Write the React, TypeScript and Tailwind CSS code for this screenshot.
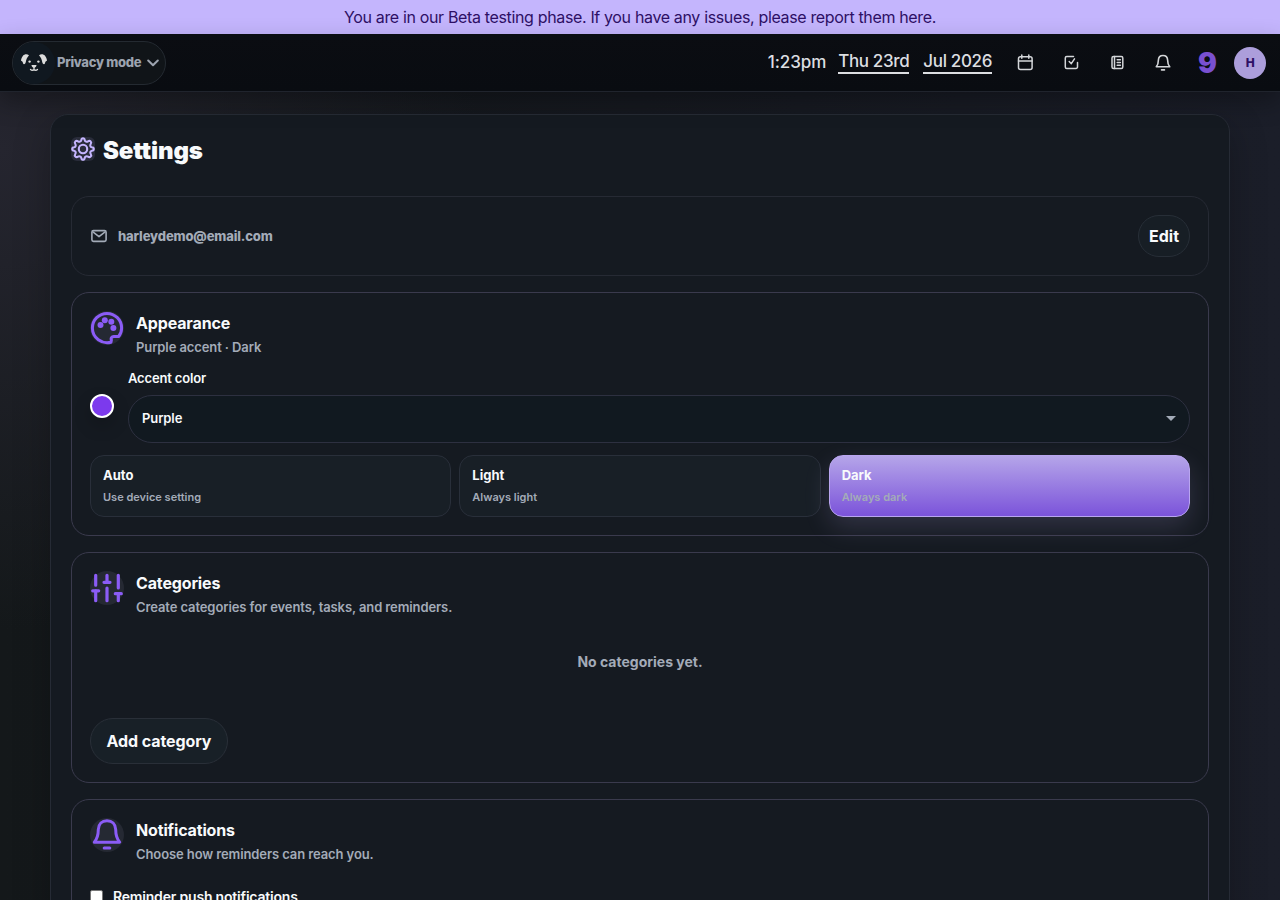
import React from 'react'

const modes = [
  { name: 'Auto', hint: 'Use device setting' },
  { name: 'Light', hint: 'Always light' },
  { name: 'Dark', hint: 'Always dark', active: true },
]

function PuppyIcon() {
  return (
    <svg width="28" height="22" viewBox="0 0 28 22" fill="#dcdcdc">
      <path d="M9 3.200 C7 1.800 4.500 2 3 3.800 C1.500 5.800 .8 7.800 1.200 9 C2.300 8.800 2.700 9.800 3 11.200 C3.600 13 5.200 12.300 5.800 10 C6.200 7.500 7 5.500 9 3.200Z" />
      <path d="M19 3.200 C21 1.800 23.500 2 25 3.800 C26.500 5.800 27.200 7.800 26.800 9 C25.700 8.800 25.300 9.800 25 11.200 C24.400 13 22.800 12.300 22.200 10 C21.800 7.500 21 5.500 19 3.200Z" />
      <circle cx="9.600" cy="9.600" r="1.200" />
      <circle cx="18.400" cy="9.600" r="1.200" />
      <path d="M11.500 13h5c0 1.500-1.200 2.500-2.500 3-1.300-.5-2.500-1.500-2.500-3Z" />
      <path d="M14 15.500v1.500M10.500 17.500c1.200 1 2.600.8 3.500 0 .9.800 2.300 1 3.500 0" fill="none" stroke="#dcdcdc" strokeWidth="1.300" strokeLinecap="round" />
    </svg>
  )
}

function GearIcon() {
  return (
    <svg width="24" height="24" viewBox="0 0 24 24" fill="none" stroke="#c4b5fd" strokeWidth="2.100" strokeLinejoin="round">
      <path d="M10.300 3.100C10.600.6 13.400.6 13.700 3.100C14 4.600 15.700 5.200 17 4.300C19 2.900 21.100 5 19.700 7C18.800 8.300 19.400 10 20.900 10.300C23.400 10.600 23.400 13.400 20.900 13.700C19.400 14 18.800 15.700 19.700 17C21.100 19 19 21.100 17 19.700C15.700 18.800 14 19.400 13.700 20.900C13.400 23.400 10.600 23.400 10.300 20.900C10 19.400 8.300 18.800 7 19.700C5 21.100 2.900 19 4.300 17C5.200 15.700 4.600 14 3.100 13.700C.6 13.400.6 10.600 3.100 10.300C4.600 10 5.200 8.300 4.300 7C2.900 5 5 2.900 7 4.300C8.300 5.200 10 4.600 10.300 3.100Z" />
      <circle cx="12" cy="12" r="4.200" />
    </svg>
  )
}

function MailIcon() {
  return (
    <svg width="18" height="18" viewBox="0 0 18 18" fill="none" stroke="currentColor" strokeWidth="1.600" strokeLinecap="round" strokeLinejoin="round">
      <rect x="1.900" y="3.600" width="14.200" height="10.800" rx="1.600" />
      <path d="M3.200 5.200L9 9.600l5.800-4.400" />
    </svg>
  )
}

function CalendarIcon() {
  return (
    <svg width="18" height="18" viewBox="0 0 18 18" fill="none" stroke="#d4d6d9" strokeWidth="1.500" strokeLinecap="round">
      <rect x="2.500" y="2.700" width="13.600" height="12.700" rx="2" />
      <path d="M2.500 7h13.600M5.800 1v3.200M12.800 1v3.200" />
    </svg>
  )
}

function TaskIcon() {
  return (
    <svg width="18" height="18" viewBox="0 0 18 18" fill="none" stroke="#d4d6d9" strokeWidth="1.500" strokeLinecap="round" strokeLinejoin="round">
      <path d="M11.500 2.500H4.800A1.500 1.500 0 0 0 3.300 4v9A1.500 1.500 0 0 0 4.800 14.500h9.200a1.500 1.500 0 0 0 1.500-1.500V8.500" />
      <path d="M7.200 7.500l2.100 2.200L12.500 4.800" />
    </svg>
  )
}

function NotebookIcon() {
  return (
    <svg width="18" height="18" viewBox="0 0 18 18" fill="none" stroke="#d4d6d9" strokeWidth="1.500" strokeLinecap="round">
      <rect x="4" y="2.500" width="10.800" height="12" rx="1.500" />
      <path d="M6.500 2.500v12M9.200 5.700h3.200M9.200 8.500h3.200M9.200 11.300h3.200" />
    </svg>
  )
}

function BellIcon({ size, weight }: { size: number; weight: number }) {
  return (
    <svg width={size} height={size} viewBox="0 0 34 34" fill="none" stroke="currentColor" strokeWidth={weight} strokeLinecap="round" strokeLinejoin="round">
      <path d="M4.300 24.200C7.500 20.500 8.300 17 8.300 11.500C8.500 6 12 2.700 17 2.700S25.500 6 25.700 11.500C25.700 17 26.500 20.500 29.700 24.200Z" />
      <path d="M14.200 30h5.600" />
    </svg>
  )
}

function SlidersIcon() {
  return (
    <svg width="34" height="34" viewBox="0 0 34 34" fill="none" stroke="currentColor" strokeWidth="3.200" strokeLinecap="round">
      <path d="M5.700 4.300v9.900M5.700 19.800v9.900M17 4.300v7M17 17v12.700M28.300 4.300v12.700M28.300 22.700v7" />
      <path d="M2.700 19.800h6M14 11.300h6M25.300 22.700h6" />
    </svg>
  )
}

function PaletteIcon() {
  return (
    <svg width="34" height="34" viewBox="0 0 34 34" fill="none">
      <path d="M21 31.200C12 33.500 2.400 27 2.400 17A14.600 14.600 0 0 1 31.600 17C31.600 20.500 30.500 23.500 28.500 25.600L23.800 25.600C21.700 25.800 20.600 27.300 21.400 29Z" stroke="#8b5cf6" strokeWidth="3" strokeLinejoin="round" />
      <g fill="#8b5cf6">
        <circle cx="10.500" cy="14" r="3" />
        <circle cx="14.800" cy="9.200" r="3" />
        <circle cx="21.300" cy="10.700" r="3" />
        <circle cx="23.400" cy="17" r="3" />
      </g>
    </svg>
  )
}

function SectionHeader({ icon, title, text }: { icon: React.ReactNode; title: string; text: string }) {
  return (
    <div className="flex gap-3">
      <span className="flex size-[34px] items-center justify-center rounded-full bg-[#252933] text-[#8b5cf6]">{icon}</span>
      <div className="pt-0.5">
        <h2 className="text-[16px] leading-5 font-bold tracking-[-0.15px] text-[#f8fafc]">{title}</h2>
        <p className="mt-1 text-[13px] leading-5 font-semibold tracking-[-0.1px] text-[#a3abb8]">{text}</p>
      </div>
    </div>
  )
}

export default function App() {
  return (
    <div className="h-[900px] overflow-hidden bg-[radial-gradient(circle_at_0_150px,#25252f,transparent_480px),linear-gradient(90deg,#14181a,#171a21_50%,#1b1e29)] font-['Inter',sans-serif] text-[#f8fafc]">
      <div className="flex h-[34px] items-center justify-center bg-[#c4b5fd] text-[16px] tracking-[-0.35px] text-[#2e1065]">
        You are in our Beta testing phase. If you have any issues, please report them here.
      </div>

      <header className="relative flex h-[58px] items-center justify-between border-b border-[#20242d] bg-[linear-gradient(180deg,#0b0d12,#090c11)] pr-3.5 pl-3 shadow-[0_10px_24px_rgba(0,0,0,0.3)]">
        <button className="flex h-11 w-[154px] items-center rounded-full border border-[#242a31] bg-[#101418] text-[#9ca3af]">
          <span className="flex size-[42px] items-center justify-center rounded-full bg-[#101820]">
            <PuppyIcon />
          </span>
          <span className="ml-0.5 pt-px text-[13px] font-extrabold tracking-[-0.3px]">Privacy mode</span>
          <svg width="12" height="12" viewBox="0 0 12 12" fill="none" stroke="currentColor" strokeWidth="2" strokeLinecap="round" strokeLinejoin="round" className="ml-1.5">
            <path d="M1.200 3.500L6 8.300l4.800-4.800" />
          </svg>
        </button>

        <div className="flex items-center text-[17px] font-medium tracking-[-0.35px] text-[#dcdee1]">
          <span className="pt-px tracking-[-0.1px]">1:23pm</span>
          <span className="ml-3 border-b-2 border-[#dcdee1] leading-[21px]">Thu 23rd</span>
          <span className="ml-3.5 border-b-2 border-[#dcdee1] leading-[21px]">Jul 2026</span>
          <nav className="ml-6 flex items-center gap-7 text-[#d4d6d9]">
            <CalendarIcon />
            <TaskIcon />
            <NotebookIcon />
            <BellIcon size={18} weight={3} />
          </nav>
          <span className="ml-[26px] w-[18px] pt-px text-center text-[28px] leading-8 font-black text-[#7950d1]">9</span>
          <span className="ml-[18px] flex size-8 items-center justify-center rounded-full bg-[#ac9edb] text-[12px] font-extrabold text-[#2e1065]">H</span>
        </div>
      </header>

      <main className="mx-[50px] mt-[22px] h-[1100px] rounded-[18px] border border-[#262b35] bg-[#151a21] px-5 pt-5 shadow-[0_12px_36px_rgba(0,0,0,0.25)]">
        <div className="flex h-8 items-center gap-2">
          <span className="mb-1 rounded-md bg-[#292c3a]">
            <GearIcon />
          </span>
          <h1 className="text-[24px] font-black tracking-[-0.15px]">Settings</h1>
        </div>

        <section className="mt-[29px] flex h-20 items-center justify-between rounded-[18px] border border-[#262a34] px-[18px]">
          <div className="flex items-center gap-2.5 text-[13px] text-[#a3abb8]">
            <MailIcon />
            <span className="pt-px font-extrabold tracking-[-0.15px]">harleydemo@email.com</span>
          </div>
          <button className="h-[42px] w-[52px] rounded-full border border-[#272e37] bg-[#171e25] text-[16px] font-bold">Edit</button>
        </section>

        <section className="mt-4 h-[244px] rounded-[18px] border border-[#3a3a4d] px-[18px] pt-[18px]">
          <SectionHeader icon={<PaletteIcon />} title="Appearance" text="Purple accent · Dark" />
          <div className="mt-[11px] flex items-end gap-3.5">
            <span className="mb-[25px] size-6 shrink-0 rounded-full border-2 border-white bg-[#7c3aed] shadow-[0_8px_18px_rgba(0,0,0,0.2)]" />
            <div className="flex-1">
              <p className="text-[13px] leading-5 font-semibold tracking-[-0.15px]">Accent color</p>
              <div className="mt-[7px] flex h-12 items-center justify-between rounded-full border border-[#2d3040] bg-[#111920] pr-[13px] pb-px pl-[13px] text-[13px] font-semibold tracking-[-0.1px]">
                Purple
                <span className="size-0 border-x-[5px] border-t-[5px] border-x-transparent border-t-[#a3abb8]" />
              </div>
            </div>
          </div>
          <div className="mt-3 grid grid-cols-3 gap-2">
            {modes.map((mode) => (
              <button
                key={mode.name}
                className={
                  mode.active
                    ? 'h-[62px] rounded-[14px] border border-[#b9a5f0] bg-[linear-gradient(180deg,#b5a5e9,#7b53da)] px-3 pb-0.5 text-left shadow-[0_10px_26px_rgba(196,181,253,0.16)]'
                    : 'h-[62px] rounded-[14px] border border-[#292f3a] bg-[#181f26] px-3 pb-0.5 text-left'
                }
              >
                <div className="text-[13px] leading-5 font-bold">{mode.name}</div>
                <div className="mt-1 text-[11px] leading-4 font-semibold text-[#a3abb8]">{mode.hint}</div>
              </button>
            ))}
          </div>
        </section>

        <section className="mt-4 h-[231px] rounded-[18px] border border-[#3a3a4d] px-[18px] pt-[18px]">
          <SectionHeader icon={<SlidersIcon />} title="Categories" text="Create categories for events, tasks, and reminders." />
          <p className="mt-[35px] text-center text-[14px] leading-5 font-bold text-[#a3abb8]">No categories yet.</p>
          <button className="mt-[46px] h-[46px] w-[138px] rounded-full border border-[#292f38] bg-[#182027] text-[16px] font-bold tracking-[-0.1px]">Add category</button>
        </section>

        <section className="mt-4 h-[240px] rounded-[18px] border border-[#3a3a4d] px-[18px] pt-[18px]">
          <SectionHeader icon={<BellIcon size={34} weight={3} />} title="Notifications" text="Choose how reminders can reach you." />
          <label className="mt-[23px] flex items-center gap-2.5 text-[14px] leading-5 font-semibold tracking-[-0.19px]">
            <span className="mb-px size-[13px] rounded-[2px] border border-[#767676] bg-white" />
            Reminder push notifications
          </label>
        </section>
      </main>
    </div>
  )
}
